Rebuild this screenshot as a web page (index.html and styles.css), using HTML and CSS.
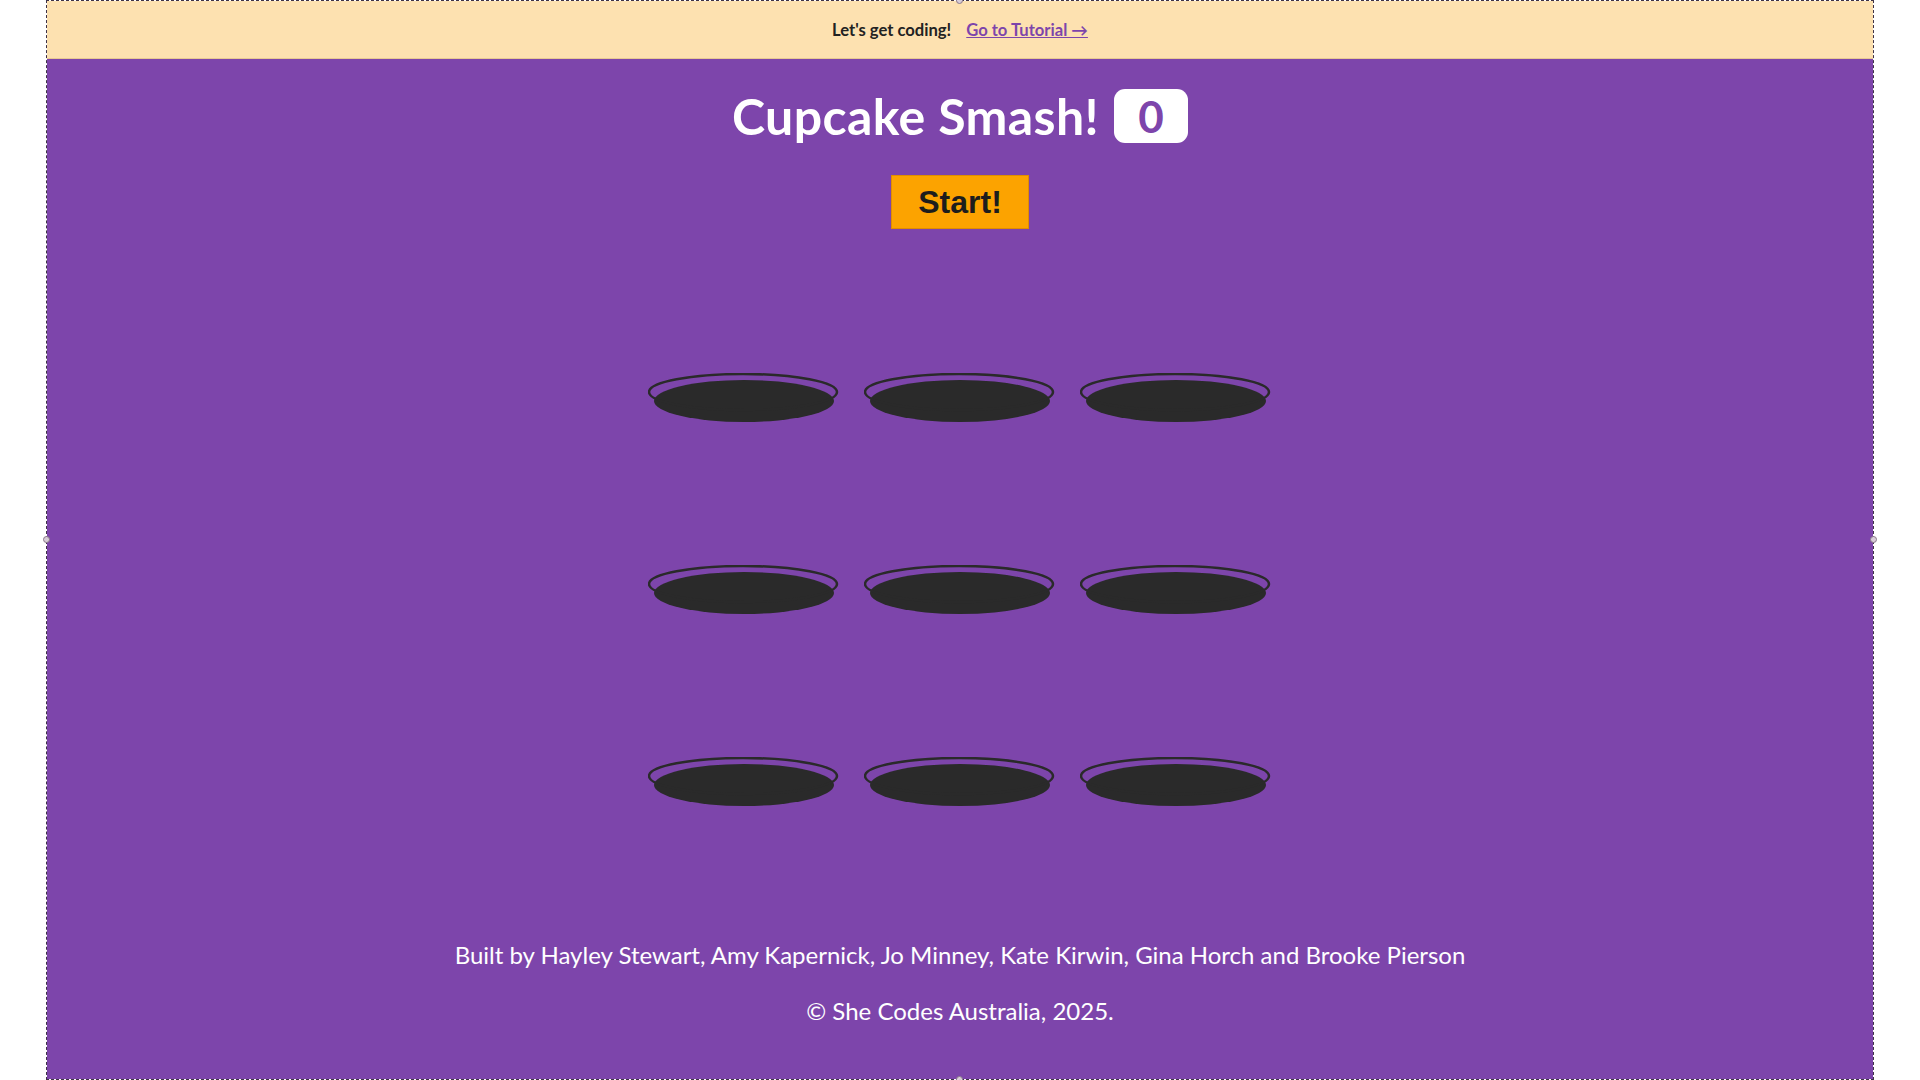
FILE: index.html
```html
<!DOCTYPE html>
<html lang="en">
<head>
<meta charset="utf-8">
<title>Cupcake Smash!</title>
<link rel="stylesheet" href="styles.css">
</head>
<body>
<div class="frame">
  <div class="banner">
    <span class="banner-text">Let's get coding!</span>
    <a class="banner-link" href="#">Go to Tutorial →</a>
  </div>
  <main class="game">
    <div class="title-row">
      <h1 class="title">Cupcake Smash!</h1>
      <span class="score">0</span>
    </div>
    <button class="start">Start!</button>
    <div class="grid">
      <div class="hole"><svg width="192" height="52" viewBox="0 0 192 52"><ellipse cx="96" cy="28" rx="90" ry="21" fill="#2a2a2a"/><ellipse cx="95" cy="19" rx="94" ry="18" fill="none" stroke="#2a2a2a" stroke-width="2.5"/></svg></div>
      <div class="hole"><svg width="192" height="52" viewBox="0 0 192 52"><ellipse cx="96" cy="28" rx="90" ry="21" fill="#2a2a2a"/><ellipse cx="95" cy="19" rx="94" ry="18" fill="none" stroke="#2a2a2a" stroke-width="2.5"/></svg></div>
      <div class="hole"><svg width="192" height="52" viewBox="0 0 192 52"><ellipse cx="96" cy="28" rx="90" ry="21" fill="#2a2a2a"/><ellipse cx="95" cy="19" rx="94" ry="18" fill="none" stroke="#2a2a2a" stroke-width="2.5"/></svg></div>
      <div class="hole"><svg width="192" height="52" viewBox="0 0 192 52"><ellipse cx="96" cy="28" rx="90" ry="21" fill="#2a2a2a"/><ellipse cx="95" cy="19" rx="94" ry="18" fill="none" stroke="#2a2a2a" stroke-width="2.5"/></svg></div>
      <div class="hole"><svg width="192" height="52" viewBox="0 0 192 52"><ellipse cx="96" cy="28" rx="90" ry="21" fill="#2a2a2a"/><ellipse cx="95" cy="19" rx="94" ry="18" fill="none" stroke="#2a2a2a" stroke-width="2.5"/></svg></div>
      <div class="hole"><svg width="192" height="52" viewBox="0 0 192 52"><ellipse cx="96" cy="28" rx="90" ry="21" fill="#2a2a2a"/><ellipse cx="95" cy="19" rx="94" ry="18" fill="none" stroke="#2a2a2a" stroke-width="2.5"/></svg></div>
      <div class="hole"><svg width="192" height="52" viewBox="0 0 192 52"><ellipse cx="96" cy="28" rx="90" ry="21" fill="#2a2a2a"/><ellipse cx="95" cy="19" rx="94" ry="18" fill="none" stroke="#2a2a2a" stroke-width="2.5"/></svg></div>
      <div class="hole"><svg width="192" height="52" viewBox="0 0 192 52"><ellipse cx="96" cy="28" rx="90" ry="21" fill="#2a2a2a"/><ellipse cx="95" cy="19" rx="94" ry="18" fill="none" stroke="#2a2a2a" stroke-width="2.5"/></svg></div>
      <div class="hole"><svg width="192" height="52" viewBox="0 0 192 52"><ellipse cx="96" cy="28" rx="90" ry="21" fill="#2a2a2a"/><ellipse cx="95" cy="19" rx="94" ry="18" fill="none" stroke="#2a2a2a" stroke-width="2.5"/></svg></div>
    </div>
    <footer class="credits">
      <p class="credits-line">Built by Hayley Stewart, Amy Kapernick, Jo Minney, Kate Kirwin, Gina Horch and Brooke Pierson</p>
      <p class="credits-line">© She Codes Australia, 2025.</p>
    </footer>
  </main>
  <span class="handle handle-top"></span>
  <span class="handle handle-bottom"></span>
  <span class="handle handle-left"></span>
  <span class="handle handle-right"></span>
</div>
</body>
</html>
```
FILE: styles.css
```css
html, body {
  margin: 0;
  padding: 0;
  background: #ffffff;
  height: 1080px;
  overflow: hidden;
}

.frame {
  position: relative;
  box-sizing: border-box;
  margin-left: 46px;
  width: 1828px;
  height: 1080px;
  border: 1px dashed #3e3246;
  display: flex;
  flex-direction: column;
  font-family: Lato, "Open Sans", sans-serif;
}

.banner {
  height: 57px;
  flex: 0 0 auto;
  background: #fde1b0;
  display: flex;
  align-items: center;
  justify-content: center;
  gap: 15px;
  font-size: 16.6px;
  border-bottom: 1px solid #e7c993;
}

.banner-text {
  font-weight: 700;
  color: #222;
}

.banner-link {
  font-weight: 700;
  color: #7d45ab;
  text-decoration: underline;
}

.game {
  flex: 1 1 auto;
  background: #7d45ab;
  display: flex;
  flex-direction: column;
  align-items: center;
}

.title-row {
  margin-top: 30px;
  display: flex;
  align-items: center;
  gap: 15px;
  height: 54px;
}

.title {
  margin: 0;
  color: #fff;
  font-size: 50px;
  font-weight: 700;
  line-height: 54px;
  letter-spacing: 0.4px;
}

.score {
  width: 74px;
  height: 54px;
  background: #fff;
  border-radius: 11px;
  color: #7d45ab;
  font-size: 44px;
  font-weight: 700;
  display: flex;
  align-items: center;
  justify-content: center;
  line-height: 1;
}

.start {
  margin-top: 32px;
  width: 138px;
  height: 54px;
  background: #fca300;
  border: 1px solid #e08d00;
  color: #1d1d1d;
  font-family: "Liberation Sans", Arial, sans-serif;
  font-weight: 700;
  font-size: 32px;
  padding: 0;
}

.grid {
  margin-top: 144px;
  display: grid;
  grid-template-columns: repeat(3, 192px);
  column-gap: 24px;
  row-gap: 140px;
}

.hole {
  width: 192px;
  height: 52px;
}

.hole svg {
  display: block;
}

.credits {
  margin-top: 130px;
  text-align: center;
  color: #fff;
  font-size: 24px;
}

.credits-line {
  margin: 0 0 24px 0;
  line-height: 32px;
}

.handle {
  position: absolute;
  width: 7px;
  height: 7px;
  border-radius: 50%;
  background: #d8ccd8;
  border: 1px solid #8a7a8a;
  box-sizing: border-box;
}

.handle-top { top: -4px; left: 50%; margin-left: -4px; }
.handle-bottom { bottom: -4px; left: 50%; margin-left: -4px; }
.handle-left { left: -4px; top: 50%; margin-top: -4px; }
.handle-right { right: -4px; top: 50%; margin-top: -4px; }
```
